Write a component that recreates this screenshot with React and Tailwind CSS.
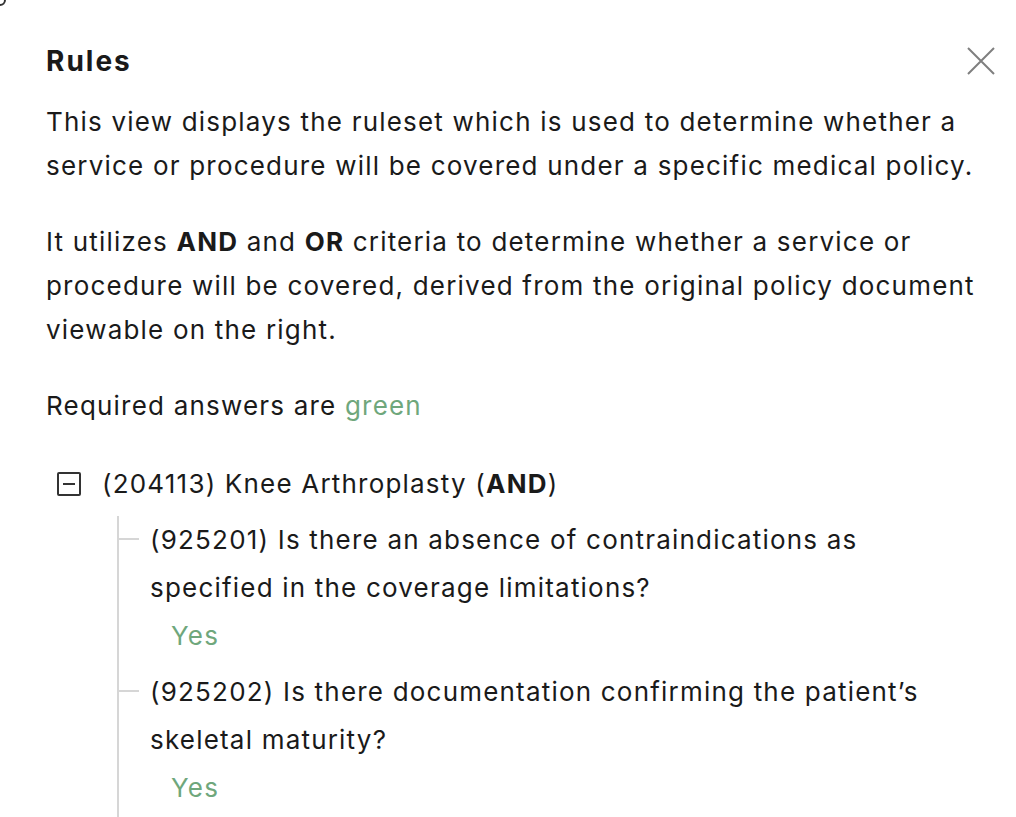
import React from 'react';

// ─── Data ─────────────────────────────────────────────────────────────────────

const rules = [
  {
    id: '925201',
    lines: ['Is there an absence of contraindications as', 'specified in the coverage limitations?'],
    answer: 'Yes',
  },
  {
    id: '925202',
    lines: ['Is there documentation confirming the patient\u2019s', 'skeletal maturity?'],
    answer: 'Yes',
  },
];

// ─── Tree node ────────────────────────────────────────────────────────────────

function RuleItem({ rule }) {
  return (
    <li className="relative pl-[31px]">
      {/* branch */}
      <span className="absolute left-0 top-[22px] h-[1.5px] w-[20px] bg-[#d6d6d6]" />
      <p className="leading-[48px] whitespace-nowrap">
        ({rule.id}) {rule.lines[0]}
        <br />
        {rule.lines[1]}
      </p>
      <p className="leading-[48px] pl-[21px] text-[#6fa77c]">{rule.answer}</p>
    </li>
  );
}

// ─── Main page ────────────────────────────────────────────────────────────────

export default function App() {
  return (
    <main className="relative min-h-screen bg-white pl-[46px] pt-[40px] text-[26px] text-[#1a1a1a] tracking-[1.2px] font-['Inter','Noto_Sans',sans-serif] overflow-hidden">
      {/* corner artifact */}
      <span className="absolute -left-[6px] -top-[6px] w-[12px] h-[12px] rounded-full border-2 border-[#333]" />

      <div className="flex items-center justify-between pr-[20px]">
        <h1 className="text-[28px] font-bold leading-[42px] tracking-[2px]">Rules</h1>
        <button className="w-[30px] h-[30px] flex items-center justify-center text-[#7f7f7f]">
          <svg className="w-[30px] h-[30px]" viewBox="0 0 30 30" fill="none" stroke="currentColor" strokeWidth={2}>
            <path d="M2 2l26 26M28 2L2 28" />
          </svg>
        </button>
      </div>

      <div className="leading-[44px] whitespace-nowrap">
        <p className="mt-[18px]">
          This view displays the ruleset which is used to determine whether a
          <br />
          service or procedure will be covered under a specific medical policy.
        </p>
        <p className="mt-[32px]">
          It utilizes <b>AND</b> and <b>OR</b> criteria to determine whether a service or
          <br />
          procedure will be covered, derived from the original policy document
          <br />
          viewable on the right.
        </p>
        <p className="mt-[32px]">
          Required answers are <span className="text-[#6fa77c]">green</span>
        </p>
      </div>

      <div className="mt-[34px] pl-[11px]">
        <div className="flex items-center gap-[21px] leading-[44px]">
          <span className="w-[24px] h-[24px] border-2 border-[#333] rounded-[2px] flex items-center justify-center">
            <span className="w-[12px] h-[2px] bg-[#333]" />
          </span>
          <span>
            (204113) Knee Arthroplasty (<b>AND</b>)
          </span>
        </div>
        <ul className="mt-[10px] ml-[60px] border-l-2 border-[#d6d6d6] flex flex-col gap-[8px] pb-[40px]">
          {rules.map((r) => (
            <RuleItem key={r.id} rule={r} />
          ))}
        </ul>
      </div>
    </main>
  );
}
